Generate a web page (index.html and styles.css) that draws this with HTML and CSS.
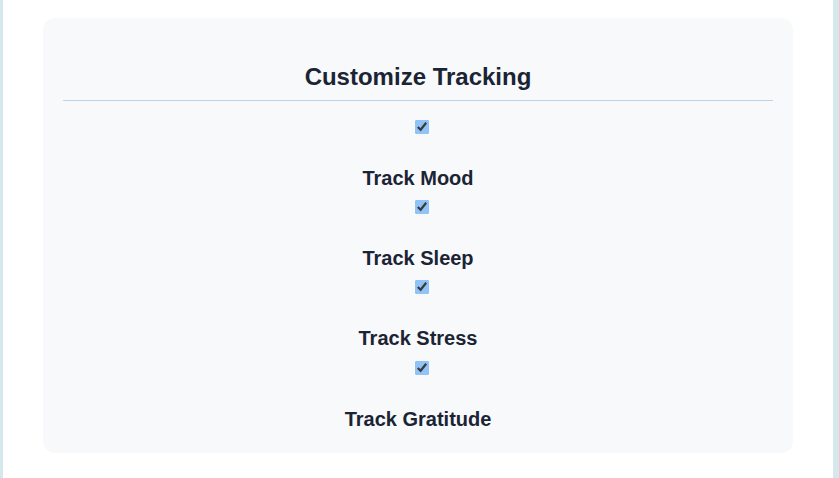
FILE: index.html
```html
<!DOCTYPE html>
<html lang="en">
<head>
<meta charset="utf-8">
<title>Customize Tracking</title>
<link rel="stylesheet" href="styles.css">
</head>
<body>
<div class="page">
  <section class="card">
    <h2 class="title">Customize Tracking</h2>
    <div class="list">
      <div class="item">
        <input type="checkbox" id="mood" checked>
        <label for="mood">Track Mood</label>
      </div>
      <div class="item">
        <input type="checkbox" id="sleep" checked>
        <label for="sleep">Track Sleep</label>
      </div>
      <div class="item">
        <input type="checkbox" id="stress" checked>
        <label for="stress">Track Stress</label>
      </div>
      <div class="item">
        <input type="checkbox" id="gratitude" checked>
        <label for="gratitude">Track Gratitude</label>
      </div>
    </div>
  </section>
</div>
</body>
</html>
```
FILE: styles.css
```css
html, body {
  margin: 0;
  padding: 0;
}
body {
  background: #d4e8ee;
  font-family: "Liberation Sans", Arial, sans-serif;
  color: #1b2434;
}
.page {
  margin: 0 6px 0 3px;
  background: #ffffff;
  height: 478px;
  padding: 18px 40px 0;
  box-sizing: border-box;
}
.card {
  background: #f7f9fb;
  border-radius: 12px;
  padding: 20px 20px 0;
  height: 435px;
  box-sizing: border-box;
}
.title {
  margin: 25px 0 0;
  padding-bottom: 9px;
  border-bottom: 1px solid #bcd3e8;
  font-size: 24px;
  line-height: 27.6px;
  font-weight: 700;
  text-align: center;
}
.list {
  display: flex;
  flex-direction: column;
  gap: 10.4px;
  margin-top: 19px;
}
.item {
  display: flex;
  flex-direction: column;
  align-items: center;
}
.item input {
  width: 14px;
  height: 14px;
  margin: 0 0 32px 8px;
  accent-color: #90c4f8;
}
.item label {
  font-size: 20px;
  line-height: 24px;
  font-weight: 700;
}
```
